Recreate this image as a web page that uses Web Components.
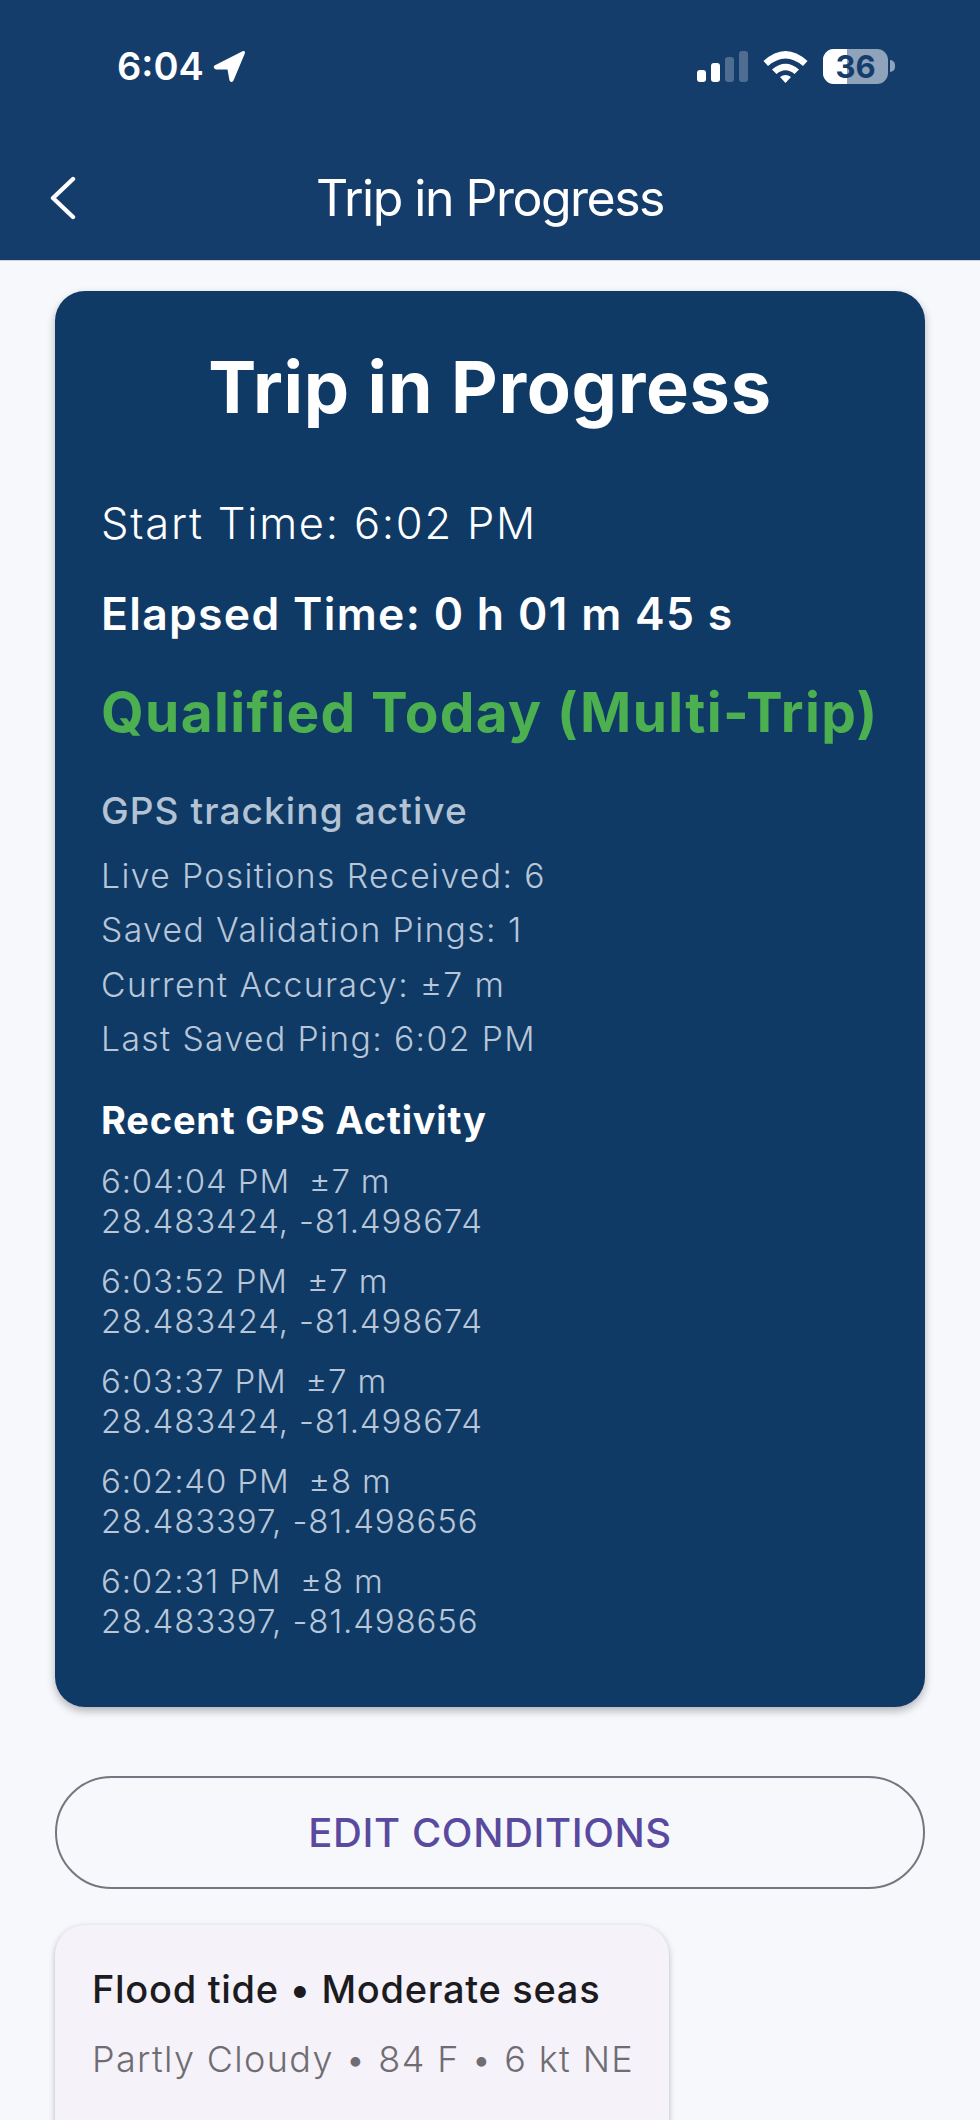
<!DOCTYPE html>
<html>
<head>
<meta charset="utf-8">
<title>Trip in Progress</title>
<style>
  html, body { margin: 0; padding: 0; }
  body { width: 980px; height: 2120px; overflow: hidden; background: #f6f8fc; font-family: Inter, "Liberation Sans", sans-serif; }
  .content { padding: 30px 55px 0; }
</style>
</head>
<body>
<trip-appbar heading="Trip in Progress"></trip-appbar>
<div class="content">
  <trip-card>
    <div slot="title">Trip in Progress</div>
    <div slot="start">Start Time: 6:02 PM</div>
    <div slot="elapsed">Elapsed Time: 0 h 01 m 45 s</div>
    <div slot="qualified">Qualified Today (Multi-Trip)</div>
    <div slot="gps">GPS tracking active</div>
    <stat-line slot="stats">Live Positions Received: 6</stat-line>
    <stat-line slot="stats">Saved Validation Pings: 1</stat-line>
    <stat-line slot="stats">Current Accuracy: ±7 m</stat-line>
    <stat-line slot="stats">Last Saved Ping: 6:02 PM</stat-line>
    <div slot="recent">Recent GPS Activity</div>
    <gps-entry slot="activity" time="6:04:04 PM" acc="±7 m" coords="28.483424, -81.498674"></gps-entry>
    <gps-entry slot="activity" time="6:03:52 PM" acc="±7 m" coords="28.483424, -81.498674"></gps-entry>
    <gps-entry slot="activity" time="6:03:37 PM" acc="±7 m" coords="28.483424, -81.498674"></gps-entry>
    <gps-entry slot="activity" time="6:02:40 PM" acc="±8 m" coords="28.483397, -81.498656"></gps-entry>
    <gps-entry slot="activity" time="6:02:31 PM" acc="±8 m" coords="28.483397, -81.498656"></gps-entry>
  </trip-card>
  <outline-button>EDIT CONDITIONS</outline-button>
  <conditions-chip main="Flood tide • Moderate seas" sub="Partly Cloudy • 84 F • 6 kt NE"></conditions-chip>
</div>

<script>
(function() {
  // status bar + title bar
  class TripAppbar extends HTMLElement {
    connectedCallback() {
      this.attachShadow({ mode: "open" });
      this.shadowRoot.innerHTML = `
      <style>
        :host { display: block; height: 260px; background: #153d6c; border-bottom: 1px solid #cfd3dc; color: #fff; }
        .status { height: 130px; display: flex; justify-content: space-between; align-items: flex-start; padding: 48px 85px 0 117px; box-sizing: border-box; }
        .time { display: flex; align-items: center; gap: 9px; font-size: 38px; font-weight: 600; line-height: 36px; height: 36px; letter-spacing: 0; }
        .right { display: flex; align-items: center; height: 36px; gap: 15px; }
        .bar { height: 130px; display: flex; align-items: center; justify-content: center; position: relative; }
        .bar h1 { margin: 0; font-size: 50px; font-weight: 400; letter-spacing: -1.5px; line-height: 60px; position: relative; top: 3px; }
        .back { position: absolute; left: 50px; top: 46px; }
        svg { display: block; }
      </style>
      <div class="status">
        <div class="time">6:04
          <svg width="33" height="33" viewBox="0 0 33 33"><path d="M1.5 15.5 L29.5 1.2 Q32.5 0 31.8 3.5 L20.5 30.5 Q18.5 33.5 16.5 30.5 L14.5 19.5 L3 19.5 Q-0.5 18 1.5 15.5 Z" fill="#fff"/></svg>
        </div>
        <div class="right">
          <svg width="52" height="32" viewBox="0 0 52 32">
            <rect x="1" y="20" width="9" height="12" rx="3" fill="#fff"/>
            <rect x="15" y="13" width="9" height="19" rx="3" fill="#fff"/>
            <rect x="29" y="7" width="9" height="25" rx="3" fill="#fff" fill-opacity=".25"/>
            <rect x="43" y="1" width="9" height="31" rx="3" fill="#fff" fill-opacity=".25"/>
          </svg>
          <svg width="45" height="33" viewBox="0 0 45 33">
            <path d="M0.5 11 Q22.5 -9 44.5 11 L40 16 Q22.5 1 5 16 Z" fill="#fff"/>
            <path d="M9 19.5 Q22.5 8 36 19.5 L31.5 24 Q22.5 16.5 13.5 24 Z" fill="#fff"/>
            <path d="M17 27 Q22.5 23 28 27 L22.5 33 Z" fill="#fff"/>
          </svg>
          <bat-level value="36"></bat-level>
        </div>
      </div>
      <div class="bar">
        <svg class="back" width="26" height="44" viewBox="0 0 26 44"><path d="M23 3 L3 22 L23 41" fill="none" stroke="#fff" stroke-width="4.4" stroke-linecap="round" stroke-linejoin="round"/></svg>
        <h1>${this.getAttribute("heading")}</h1>
      </div>`;
    }
  }

  class BatLevel extends HTMLElement {
    connectedCallback() {
      this.attachShadow({ mode: "open" });
      this.shadowRoot.innerHTML = `
      <style>
        :host { display: flex; align-items: center; gap: 2px; }
        .body { width: 65px; height: 35px; border-radius: 11px; overflow: hidden; position: relative; background: #8fa3bb; text-align: center; }
        .fill { position: absolute; left: 0; top: 0; bottom: 0; width: 24px; background: #fff; }
        .num { position: relative; font-size: 31px; font-weight: 700; line-height: 35px; color: #153d6c; letter-spacing: 0; }
        .nub { width: 5px; height: 12px; background: #8fa3bb; border-radius: 0 5px 5px 0; }
      </style>
      <div class="body"><div class="fill"></div><div class="num">${this.getAttribute("value")}</div></div>
      <div class="nub"></div>`;
    }
  }

  // the big blue card, slots keep the spacing per block
  class TripCard extends HTMLElement {
    constructor() {
      super();
      this.attachShadow({ mode: "open" });
      this.shadowRoot.innerHTML = `
      <style>
        :host { display: block; height: 1416px; box-sizing: border-box; background: #0f3a66; border-radius: 30px; box-shadow: 0 4px 9px rgba(0,0,0,.28); color: #fff; padding: 0 46px; overflow: hidden; }
        .title { font-size: 72px; font-weight: 700; text-align: center; line-height: 80px; margin-top: 56px; letter-spacing: 0.7px; }
        .start { font-size: 43.5px; font-weight: 350; line-height: 52px; margin-top: 70px; letter-spacing: 1.77px; }
        .elapsed { font-size: 44.5px; font-weight: 600; line-height: 52px; margin-top: 39px; letter-spacing: 1.3px; }
        .qualified { font-size: 55px; font-weight: 700; line-height: 64px; margin-top: 40px; color: #4caf50; letter-spacing: 1.35px; white-space: nowrap; }
        .gps { font-size: 37px; font-weight: 500; line-height: 44px; margin-top: 45px; color: #b4c3d4; letter-spacing: 1.1px; }
        .stats { margin-top: 21px; display: flex; flex-direction: column; gap: 10.4px; }
        .recent { font-size: 38px; font-weight: 700; line-height: 44px; margin-top: 37px; letter-spacing: 0.8px; }
        .activity { margin-top: 19px; display: flex; flex-direction: column; gap: 20px; }
      </style>
      <div class="title"><slot name="title"></slot></div>
      <div class="start"><slot name="start"></slot></div>
      <div class="elapsed"><slot name="elapsed"></slot></div>
      <div class="qualified"><slot name="qualified"></slot></div>
      <div class="gps"><slot name="gps"></slot></div>
      <div class="stats"><slot name="stats"></slot></div>
      <div class="recent"><slot name="recent"></slot></div>
      <div class="activity"><slot name="activity"></slot></div>`;
    }
  }

  class StatLine extends HTMLElement {
    constructor() {
      super();
      this.attachShadow({ mode: "open" });
      this.shadowRoot.innerHTML = `
      <style>
        :host { display: block; font-size: 33.7px; font-weight: 350; line-height: 44px; color: #b8c6d8; letter-spacing: 1.4px; }
      </style><slot></slot>`;
    }
  }

  class GpsEntry extends HTMLElement {
    connectedCallback() {
      this.attachShadow({ mode: "open" });
      this.shadowRoot.innerHTML = `
      <style>
        :host { display: block; font-size: 33px; font-weight: 350; line-height: 40px; color: #b8c6d8; letter-spacing: 0.85px; }
        .acc { margin-left: 19px; }
      </style>
      <div>${this.getAttribute("time")}<span class="acc">${this.getAttribute("acc")}</span></div>
      <div>${this.getAttribute("coords")}</div>`;
    }
  }

  class OutlineButton extends HTMLElement {
    constructor() {
      super();
      this.attachShadow({ mode: "open" });
      this.shadowRoot.innerHTML = `
      <style>
        :host { display: flex; align-items: center; justify-content: center; box-sizing: border-box; height: 113px; margin-top: 69px; border: 2px solid #74777f; border-radius: 57px; color: #5a4a9f; font-size: 40px; font-weight: 500; letter-spacing: 0.6px; }
      </style><slot></slot>`;
    }
  }

  class ConditionsChip extends HTMLElement {
    connectedCallback() {
      this.attachShadow({ mode: "open" });
      this.shadowRoot.innerHTML = `
      <style>
        :host { display: block; box-sizing: border-box; width: 614px; height: 240px; margin-top: 36px; padding: 0 37px; background: #f5f2f9; border-radius: 30px; box-shadow: 0 2px 6px rgba(0,0,0,.25); }
        .main { font-size: 38px; font-weight: 500; line-height: 48px; color: #1c1b1f; padding-top: 40px; letter-spacing: 0.7px; white-space: nowrap; }
        .sub { font-size: 36px; font-weight: 350; line-height: 46px; color: #6f6d72; margin-top: 23px; letter-spacing: 1.35px; white-space: nowrap; }
      </style>
      <div class="main">${this.getAttribute("main")}</div>
      <div class="sub">${this.getAttribute("sub")}</div>`;
    }
  }

  customElements.define("bat-level", BatLevel);
  customElements.define("trip-appbar", TripAppbar);
  customElements.define("trip-card", TripCard);
  customElements.define("stat-line", StatLine);
  customElements.define("gps-entry", GpsEntry);
  customElements.define("outline-button", OutlineButton);
  customElements.define("conditions-chip", ConditionsChip);
})();
</script>
</body>
</html>
